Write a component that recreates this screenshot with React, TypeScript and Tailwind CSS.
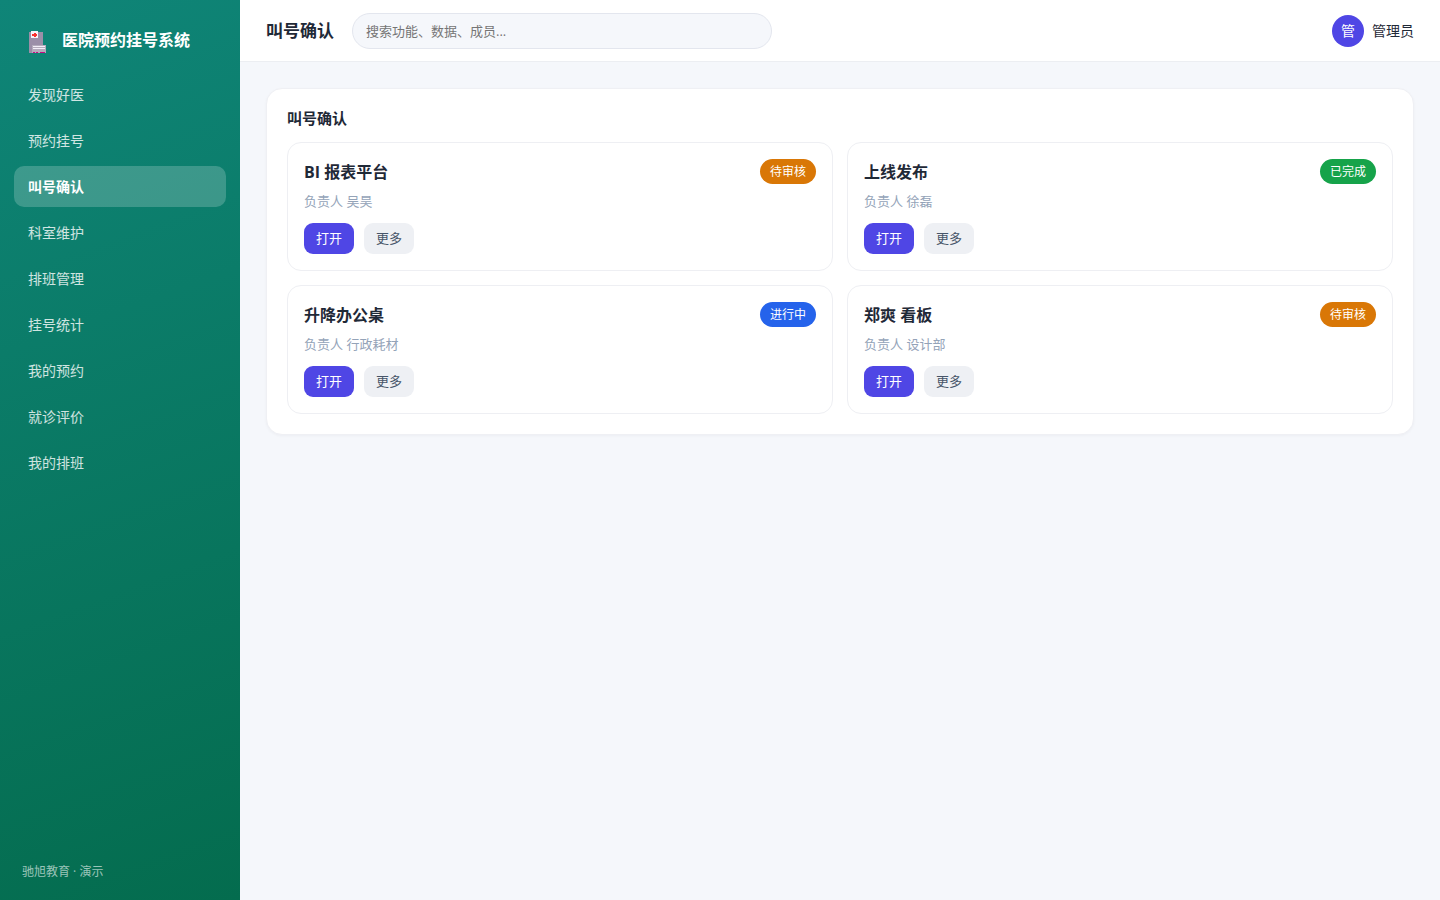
import React from 'react';
import clsx from 'clsx';

const menus = [
  '发现好医',
  '预约挂号',
  '叫号确认',
  '科室维护',
  '排班管理',
  '挂号统计',
  '我的预约',
  '就诊评价',
  '我的排班',
];

const statusColors = {
  待审核: 'bg-[#d97706]',
  已完成: 'bg-[#16a34a]',
  进行中: 'bg-[#2563eb]',
};

type Item = {
  title: string;
  owner: string;
  status: keyof typeof statusColors;
};

const items: Item[] = [
  { title: 'BI 报表平台', owner: '吴昊', status: '待审核' },
  { title: '上线发布', owner: '徐磊', status: '已完成' },
  { title: '升降办公桌', owner: '行政耗材', status: '进行中' },
  { title: '郑爽 看板', owner: '设计部', status: '待审核' },
];

const HospitalIcon = () => (
  <svg className="h-7 w-5 shrink-0" viewBox="0 -4 20 28" shapeRendering="crispEdges" aria-hidden="true">
    <rect x="1" y="2" width="14" height="21" fill="#9b8fa8" />
    <rect x="3" y="1" width="7" height="7" fill="#f5f3f7" />
    <path d="M4 4h5v2H4zM6 3h2v4H6z" fill="#f8312f" />
    <rect x="4" y="15" width="14" height="8" fill="#b4acbc" />
    <rect x="5" y="16" width="12" height="1" fill="#f3eef8" />
    <rect x="5" y="18" width="12" height="1" fill="#f3eef8" />
    <path d="M5 22h2v1H5zM8 22h2v1H8zM12 22h5v1h-5z" fill="#ca0b82" />
  </svg>
);

const Sidebar = () => (
  <aside className="flex w-60 shrink-0 flex-col bg-[linear-gradient(160deg,#0f8578,#046c4e)] px-[14px] pt-5 pb-4 text-white">
    <div className="flex h-10 items-center gap-[14px] px-[14px]">
      <HospitalIcon />
      <span className="text-base font-bold">医院预约挂号系统</span>
    </div>
    <nav className="mt-[14px] flex flex-col gap-[5px]">
      {menus.map(menu => (
        <a
          key={menu}
          href="#"
          className={clsx(
            'flex h-[41px] items-center rounded-[10px] px-[14px] text-sm',
            menu === '叫号确认' ? 'bg-white/20 font-bold text-white' : 'text-white/80'
          )}
        >
          {menu}
        </a>
      ))}
    </nav>
    <div className="mt-auto px-2 text-xs leading-6 text-white/60">驰旭教育 · 演示</div>
  </aside>
);

const Header = () => (
  <header className="flex items-center gap-[18px] border-b border-[#eceef2] bg-white px-[26px] pt-[13px] pb-3 text-[#1f2937]">
    <h1 className="text-[17px] leading-6 font-bold">叫号确认</h1>
    <input
      type="search"
      aria-label="搜索"
      placeholder="搜索功能、数据、成员..."
      className="h-9 w-[420px] rounded-full border border-[#e3e6ee] bg-[#f5f7fb] px-[13px] text-[13px] outline-none placeholder:text-[#757575]"
    />
    <div className="ml-auto flex items-center gap-2 text-sm">
      <span className="flex h-8 w-8 items-center justify-center rounded-full bg-[#4f46e5] text-white">管</span>
      <span>管理员</span>
    </div>
  </header>
);

const ItemCard = ({ item }: { item: Item }) => (
  <article className="rounded-[14px] border border-[#eeeff3] p-4">
    <div className="flex items-center justify-between">
      <h3 className="text-base font-bold">{item.title}</h3>
      <span className={clsx('rounded-full px-[10px] text-xs leading-[25px] text-white', statusColors[item.status])}>
        {item.status}
      </span>
    </div>
    <p className="mt-2 text-[13px] leading-[19px] text-[#94a3b8]">负责人 {item.owner}</p>
    <div className="mt-3 flex gap-[10px] text-[13px] leading-[31px]">
      <button type="button" className="rounded-[9px] bg-[#4f46e5] px-3 text-white">打开</button>
      <button type="button" className="rounded-[9px] bg-[#eef0f4] px-3 text-[#475569]">更多</button>
    </div>
  </article>
);

const App = () => {
  return (
    <div className="flex min-h-screen bg-[#f5f7fb] font-['Open_Sans','Noto_Sans_CJK_SC',sans-serif] text-[#1f2937]">
      <Sidebar />
      <div className="min-w-0 flex-1">
        <Header />
        <main className="p-[26px]">
          <section className="rounded-2xl border border-[#eff0f4] bg-white p-5 shadow-[0_1px_3px_rgba(16,24,40,0.04)]">
            <h2 className="mb-[14px] text-[15px] leading-[19px] font-bold">叫号确认</h2>
            <div className="grid grid-cols-2 gap-[14px]">
              {items.map(item => (
                <ItemCard key={item.title} item={item} />
              ))}
            </div>
          </section>
        </main>
      </div>
    </div>
  );
};

export default App;
